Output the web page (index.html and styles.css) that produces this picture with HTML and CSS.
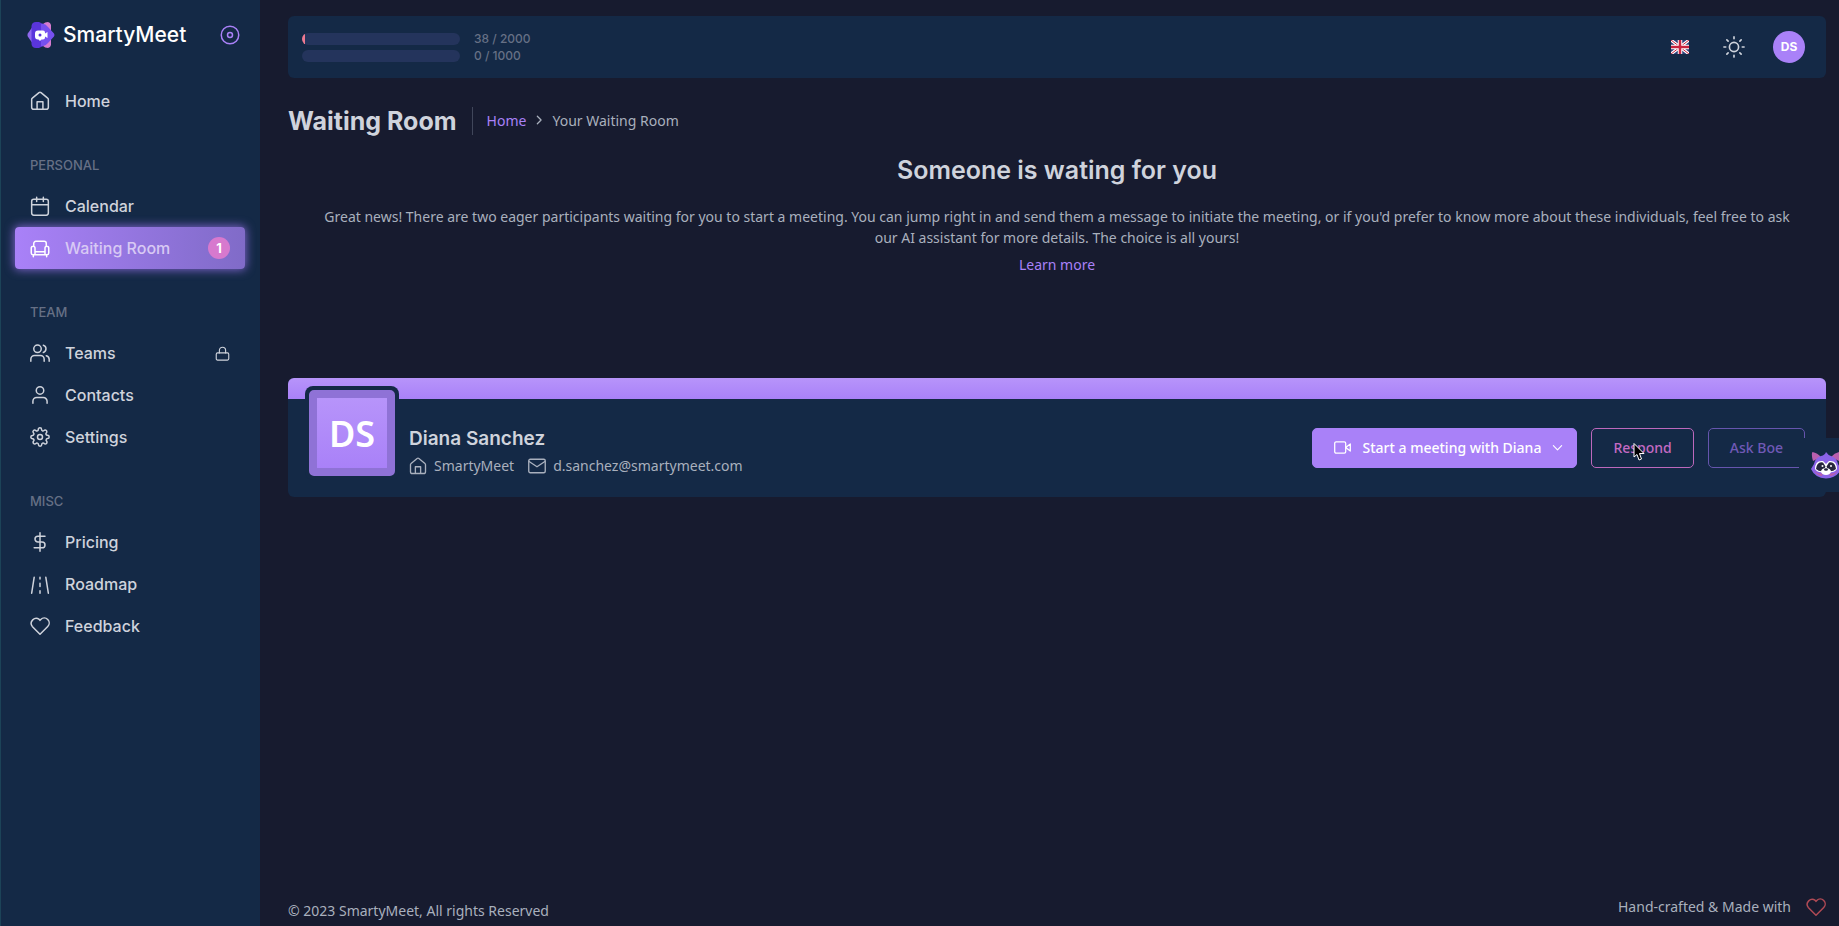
FILE: index.html
```html
<!DOCTYPE html>
<html lang="en">
<head>
<meta charset="utf-8">
<title>Waiting Room</title>
<link rel="stylesheet" href="styles.css">
</head>
<body>
<svg class="sprite" aria-hidden="true">
  <symbol id="i-home" viewBox="0 0 24 24"><path d="M2 10.200v9.300A2.500 2.500 0 0 0 4.500 22h15a2.500 2.500 0 0 0 2.500-2.500v-9.300a2 2 0 0 0-.8-1.600L13.200 2a2 2 0 0 0-2.400 0L2.800 8.600a2 2 0 0 0-.8 1.600zM8.500 22v-9h7v9"/></symbol>
  <symbol id="i-heart" viewBox="0 0 24 24"><path d="M21.300 4.100a6 6 0 0 0-8.400 0L12 5.200l-.9-1.100a6 6 0 0 0-8.400 8.400L12 21.800l9.300-9.300a6 6 0 0 0 0-8.400z"/></symbol>
</svg>
<div class="app">
  <aside class="sidebar">
    <div class="brand">
      <a class="brand-link" href="#">
        <svg class="brand-logo" viewBox="0 0 28 28" aria-hidden="true">
          <path fill="#d77bd0" d="M16 3q2-2 5-2 2.500.5 3 3v20q-.5 2.500-3 3-3 0-5-2z"/>
          <path fill="#8f68ee" d="M6 5 .8 12.500q-.8 1.500 0 3L6 23z"/>
          <path fill="#5a35dc" d="M4.500 5Q5 1 9 1h3l4 2 3 11-3 11-4 2H9q-4 0-4.500-4z"/>
          <path fill="#7650f0" d="M14 3q4-1 7 3l6 6.500q1 1.500 0 3L21 22q-3 4-7 3z"/>
          <path fill="#fff" d="M11 9.500h5q2 0 2 2v1l2.500-1.500v6L18 15.500v1q0 2-2 2h-1.500L13 20l-1.500-1.500H11q-3 0-3-3v-3q0-3 3-3z"/>
          <circle cx="13" cy="14" r="1.500" fill="#5a35dc"/>
        </svg>
        <span class="brand-name">SmartyMeet</span>
      </a>
      <button class="icon-button brand-toggle" aria-label="Pin menu"><svg class="icon" viewBox="0 0 24 24"><circle cx="12" cy="12" r="10.500"/><circle cx="12" cy="12" r="3"/></svg></button>
    </div>
    <nav class="nav">
      <a class="nav-item" href="#"><svg class="icon"><use href="#i-home"/></svg><span>Home</span></a>
      <h2 class="nav-heading">Personal</h2>
      <a class="nav-item" href="#"><svg class="icon" viewBox="0 0 24 24"><rect x="2" y="4" width="20" height="19" rx="2.500"/><path d="M8 1.500v5M16 1.500v5M2 10.500h20"/></svg><span>Calendar</span></a>
      <a class="nav-item nav-item-active" href="#"><svg class="icon" viewBox="0 0 24 24"><path d="M4.500 10V6.500A2.500 2.500 0 0 1 7 4h10a2.500 2.500 0 0 1 2.500 2.500V10M6 16.500h12M6 20v-8a2.200 2.200 0 0 0-4.500 0v6a2 2 0 0 0 2 2h17a2 2 0 0 0 2-2v-6a2.200 2.200 0 0 0-4.500 0v8M4 20v2.500M20 20v2.500"/></svg><span>Waiting Room</span><span class="badge">1</span></a>
      <h2 class="nav-heading">Team</h2>
      <a class="nav-item" href="#"><svg class="icon" viewBox="0 0 24 24"><circle cx="9" cy="7" r="4.500"/><path d="M1 22v-2.500A4.500 4.500 0 0 1 5.500 15h7a4.500 4.500 0 0 1 4.500 4.500V22M16 2.700a4.500 4.500 0 0 1 0 8.600M19.500 15.200A4.500 4.500 0 0 1 23 19.500V22"/></svg><span>Teams</span><svg class="icon lock" viewBox="0 0 24 24"><rect x="2" y="11" width="20" height="11.500" rx="2"/><path d="M7 11V7a5 5 0 0 1 10 0v4"/></svg></a>
      <a class="nav-item" href="#"><svg class="icon" viewBox="0 0 24 24"><circle cx="12" cy="6.500" r="4.500"/><path d="M3.500 22v-2.500A4.500 4.500 0 0 1 8 15h8a4.500 4.500 0 0 1 4.500 4.500V22"/></svg><span>Contacts</span></a>
      <a class="nav-item" href="#"><svg class="icon" viewBox="0 0 24 24"><circle cx="12" cy="12" r="3"/><path d="M19.400 15a1.650 1.650 0 0 0 .33 1.820l.06.06a2 2 0 1 1-2.830 2.830l-.06-.06a1.650 1.650 0 0 0-2.800 1.170V21a2 2 0 0 1-4 0v-.09A1.650 1.650 0 0 0 9 19.400a1.650 1.650 0 0 0-1.820.33l-.06.06a2 2 0 1 1-2.830-2.830l.06-.06a1.650 1.650 0 0 0-1.170-2.800H3a2 2 0 0 1 0-4h.09A1.650 1.650 0 0 0 4.600 9a1.650 1.650 0 0 0-.33-1.820l-.06-.06a2 2 0 1 1 2.830-2.830l.06.06A1.650 1.650 0 0 0 9.900 3.180V3a2 2 0 0 1 4 0v.09a1.650 1.650 0 0 0 2.800 1.170l.06-.06a2 2 0 1 1 2.830 2.830l-.06.06a1.650 1.650 0 0 0 1.170 2.800H21a2 2 0 0 1 0 4h-.09A1.650 1.650 0 0 0 19.400 15z"/></svg><span>Settings</span></a>
      <h2 class="nav-heading">Misc</h2>
      <a class="nav-item" href="#"><svg class="icon" viewBox="0 0 24 24"><path d="M12 1v22M18 5H9.500a3.500 3.500 0 0 0 0 7h5a3.500 3.500 0 0 1 0 7H5"/></svg><span>Pricing</span></a>
      <a class="nav-item" href="#"><svg class="icon" viewBox="0 0 24 24"><path d="M5 4 2 23M19 4l3 19M12 4v2M12 11v4M12 20v3"/></svg><span>Roadmap</span></a>
      <a class="nav-item" href="#"><svg class="icon"><use href="#i-heart"/></svg><span>Feedback</span></a>
    </nav>
  </aside>

  <div class="page">
    <header class="topbar">
      <div class="usage">
        <div class="usage-row"><div class="meter"><div class="meter-fill" style="width:1.9%"></div></div><span>38 / 2000</span></div>
        <div class="usage-row"><div class="meter"></div><span>0 / 1000</span></div>
      </div>
      <div class="tools">
        <button class="icon-button" aria-label="Language: English">
          <svg class="flag" viewBox="0 0 36 28"><path fill="#2b3f78" d="M0 0h36v28H0z"/><path stroke="#fff" stroke-width="6" d="M0 0l36 28M36 0 0 28"/><path stroke="#c8233f" stroke-width="2" d="M0 0l36 28M36 0 0 28"/><path stroke="#fff" stroke-width="9" d="M18 0v28M0 14h36"/><path stroke="#c8233f" stroke-width="5" d="M18 0v28M0 14h36"/></svg>
        </button>
        <button class="icon-button" aria-label="Toggle theme"><svg class="icon icon-sun" viewBox="0 0 24 24"><circle cx="12" cy="12" r="5"/><path d="M12 1v2M12 21v2M4.200 4.200l1.400 1.400M18.400 18.400l1.400 1.400M1 12h2M21 12h2M4.200 19.800l1.400-1.400M18.400 5.600l1.400-1.400"/></svg></button>
        <button class="avatar">DS</button>
      </div>
    </header>

    <main class="main">
      <div class="title-row">
        <h1 class="title">Waiting Room</h1>
        <nav class="crumbs" aria-label="Breadcrumb">
          <a href="#">Home</a>
          <svg class="icon icon-crumb" viewBox="0 0 24 24"><path d="m8 3 9 9-9 9"/></svg>
          <span>Your Waiting Room</span>
        </nav>
      </div>
      <section class="intro">
        <h2 class="intro-title">Someone is wating for you</h2>
        <p class="intro-text">Great news! There are two eager participants waiting for you to start a meeting. You can jump right in and send them a message to initiate the meeting, or if you'd prefer to know more about these individuals, feel free to ask our AI assistant for more details. The choice is all yours!</p>
        <a href="#">Learn more</a>
      </section>
      <article class="card">
        <div class="card-banner"></div>
        <div class="card-body">
          <div class="portrait"><span class="portrait-inner">DS</span></div>
          <div class="person">
            <h3 class="person-name">Diana Sanchez</h3>
            <div class="person-meta">
              <span class="meta"><svg class="icon icon-meta"><use href="#i-home"/></svg>SmartyMeet</span>
              <span class="meta"><svg class="icon icon-meta" viewBox="0 0 24 24"><rect x="1" y="3" width="22" height="18" rx="2"/><path d="m1.500 6 10.500 7L22.500 6"/></svg>d.sanchez@smartymeet.com</span>
            </div>
          </div>
          <div class="actions">
            <button class="button button-primary"><svg class="icon icon-video" viewBox="0 0 24 24"><rect x="1" y="4" width="15.500" height="16" rx="2"/><path d="m16.500 12 6.500-5v10z"/></svg>Start a meeting with Diana<svg class="icon icon-caret" viewBox="0 0 24 24"><path d="m3 8 9 9 9-9"/></svg></button>
            <button class="button button-respond">Respond</button>
            <button class="button button-ask">Ask Boe</button>
          </div>
        </div>
      </article>
    </main>

    <footer class="footer">
      <span class="copyright">© 2023 SmartyMeet, All rights Reserved</span>
      <span class="made">Hand-crafted &amp; Made with <svg class="icon"><use href="#i-heart"/></svg></span>
    </footer>
  </div>
</div>

<button class="assistant" aria-label="Open assistant">
  <svg class="raccoon" viewBox="0 0 30 28">
    <path fill="#b95fae" d="M2 10Q0 3 1.500 1q5 1 8.500 5zM28 10q2-7 .5-9-5 1-8.500 5z"/>
    <path fill="#8b63e8" d="M15 1q2 3 5 4 6 2 7 8l3 5q-4 9-15 9.500Q4 27 0 18l3-5q1-6 7-8 4-1 5-4z"/>
    <path fill="#b95fae" d="M3 19q4 5 9 3l-1 3q-5 0-8-6zM27 19q-4 5-9 3l1 3q5 0 8-6z"/>
    <path fill="#fff" d="M4 18Q4 9 12 10l3 3 3-3q8-1 8 8-3 4-8 3-3 3-6 0-5 1-8-3z"/>
    <path fill="#26263d" d="M5 18q1-8 7-6.500l2.500 4-2 4.500q-4 1-7.500-2zM25 18q-1-8-7-6.500l-2.500 4 2 4.500q4 1 7.500-2z"/>
    <ellipse cx="15" cy="20.500" rx="5" ry="3.500" fill="#fff"/>
    <ellipse cx="15" cy="18.500" rx="2" ry="1.300" fill="#26263d"/>
    <circle cx="11.500" cy="15" r="1" fill="#fff"/><circle cx="20" cy="15" r="1" fill="#fff"/>
  </svg>
</button>
<svg class="cursor" viewBox="0 0 12 19" aria-hidden="true"><path fill="#000" stroke="#fff" d="M1 1.500v13.500l3-2.500 2 5.500 2.500-1-2-5.500H11z"/></svg>
</body>
</html>
```

FILE: styles.css
```css
* { box-sizing: border-box; }

:root {
  --bg: #171b2f;
  --panel: #142946;
  --text: #a9b0bd;
  --bright: #cfd3dc;
  --muted: #667085;
  --accent: #a981f8;
  --display: Inter, "Noto Sans", sans-serif;
}

body {
  margin: 0;
  background: var(--bg);
  color: var(--text);
  font: 14px/21px "Noto Sans", sans-serif;
}

h1, h2, h3, p { margin: 0; }
a { color: var(--accent); text-decoration: none; }
button { font: inherit; cursor: pointer; }

.sprite { position: absolute; width: 0; height: 0; }

.icon {
  width: 20px;
  height: 20px;
  flex: none;
  fill: none;
  stroke: currentColor;
  stroke-width: 1.8;
  stroke-linecap: round;
  stroke-linejoin: round;
}

.icon-button {
  display: flex;
  padding: 0;
  border: 0;
  background: none;
  color: inherit;
}

.app { display: flex; min-height: 100vh; }

.sidebar {
  width: 260px;
  flex: none;
  padding: 0 15px 0 14px;
  background: var(--panel);
  border-left: 1px solid #1c4358;
}

.brand {
  display: flex;
  align-items: center;
  justify-content: space-between;
  height: 70px;
  padding: 0 5px 0 12px;
}

.brand-link { display: flex; align-items: center; gap: 8px; }
.brand-logo { width: 28px; height: 28px; }
.brand-name { color: #fff; font: 500 21px/28px var(--display); }
.brand-toggle { color: var(--accent); }

.nav { display: flex; flex-direction: column; padding-top: 10px; }

.nav-item {
  display: flex;
  align-items: center;
  gap: 15px;
  height: 42px;
  padding: 0 15px;
  border-radius: 4px;
  color: var(--bright);
  font: 500 16px/22px var(--display);
}

.nav-item-active {
  color: #d8c9f4;
  background: linear-gradient(90deg, #a981f8, #806bc8);
  box-shadow: 0 0 10px 1px #7c63c8;
}
.nav-item-active .icon { color: #fff; }

.badge {
  display: grid;
  place-items: center;
  width: 22px;
  height: 22px;
  margin-left: auto;
  border-radius: 50%;
  background: #d779ce;
  color: #fff;
  font-weight: 700;
  font-size: 13px;
}

.lock { width: 15px; height: 15px; margin-left: auto; }

.nav-heading {
  padding: 33px 15px 9px;
  color: var(--muted);
  font: 500 13px/21px var(--display);
  text-transform: uppercase;
}

.page {
  display: flex;
  flex: 1;
  flex-direction: column;
  min-width: 0;
  padding: 16px 13px 0 28px;
}

.topbar {
  display: flex;
  align-items: center;
  justify-content: space-between;
  height: 62px;
  padding: 0 21px 0 14px;
  border-radius: 6px;
  background: var(--panel);
}

.usage-row {
  display: flex;
  align-items: center;
  gap: 14px;
  color: var(--muted);
  font: 500 12px/17px var(--display);
}

.meter { width: 158px; height: 12px; overflow: hidden; border-radius: 6px; background: #24345c; }
.meter-fill { height: 100%; background: #ee7a90; }

.tools { display: flex; align-items: center; gap: 34px; }
.flag { width: 18px; height: 14px; }
.icon-sun { width: 22px; height: 22px; color: var(--bright); }

.avatar {
  width: 32px;
  height: 32px;
  margin-left: -6px;
  padding: 0;
  border: 0;
  border-radius: 50%;
  background: var(--accent);
  color: #fff;
  font: 700 12px/32px var(--display);
}

.main { flex: 1; }

.title-row { display: flex; align-items: center; padding-top: 29px; }
.title {
  padding-right: 15px;
  border-right: 1px solid #40465a;
  color: var(--bright);
  font: 700 25px/28px var(--display);
}
.crumbs { display: flex; align-items: center; gap: 8px; padding: 0 0 2px 14px; }
.icon-crumb { width: 10px; height: 10px; stroke-width: 3; }

.intro { padding: 19px 24px 0; text-align: center; }
.intro-title {
  margin-bottom: 20px;
  color: var(--bright);
  font: 600 25px/32px var(--display);
}
.intro-text { margin-bottom: 6px; }

.card { margin-top: 103px; overflow: hidden; border-radius: 6px; background: var(--panel); }
.card-banner { height: 21px; background: linear-gradient(#b794fa, #a981f8); }
.card-body {
  display: flex;
  align-items: flex-start;
  gap: 10px;
  padding: 0 21px 17px 17px;
}

.portrait {
  width: 94px;
  margin-top: -13px;
  padding: 4px;
  border-radius: 8px;
  background: var(--panel);
}
.portrait-inner {
  display: grid;
  place-items: center;
  height: 86px;
  border: 8px solid #8f72d6;
  border-radius: 5px;
  background: linear-gradient(#b794fa, #a981f8);
  color: #fff;
  font-size: 36px;
  font-weight: 600;
}

.person { padding-top: 28px; }
.person-name { color: var(--bright); font: 600 19px/24px var(--display); }
.person-meta { display: flex; gap: 14px; padding-top: 4px; }
.meta { display: flex; align-items: center; gap: 7px; }
.icon-meta { width: 18px; height: 18px; }

.actions { display: flex; gap: 14px; margin-left: auto; padding-top: 29px; }
.button {
  display: flex;
  align-items: center;
  height: 40px;
  padding: 0 21px 2px;
  border: 1px solid;
  border-radius: 5px;
  background: none;
  font-weight: 500;
}
.button-primary { padding-right: 13px; border-color: var(--accent); background: var(--accent); color: #fff; }
.button-respond { border-color: #bd68bc; color: #c46ac3; }
.button-ask { border-color: #6655ae; color: #7059b6; }
.icon-video { width: 17px; height: 17px; margin-right: 12px; }
.icon-caret { width: 11px; height: 11px; margin-left: 11px; stroke-width: 2.5; }

.footer {
  display: flex;
  align-items: flex-start;
  justify-content: space-between;
  padding-bottom: 5px;
}
.copyright { padding-top: 4px; }
.made { display: flex; align-items: center; gap: 15px; }
.made .icon { color: #b04a55; }

.assistant {
  position: fixed;
  top: 438px;
  right: 0;
  width: 40px;
  height: 54px;
  overflow: hidden;
  padding: 0 0 0 12px;
  border: 0;
  background: var(--panel);
}
.raccoon { display: block; width: 30px; height: 28px; }

.cursor { position: fixed; left: 1633px; top: 442px; width: 12px; height: 19px; }
```
